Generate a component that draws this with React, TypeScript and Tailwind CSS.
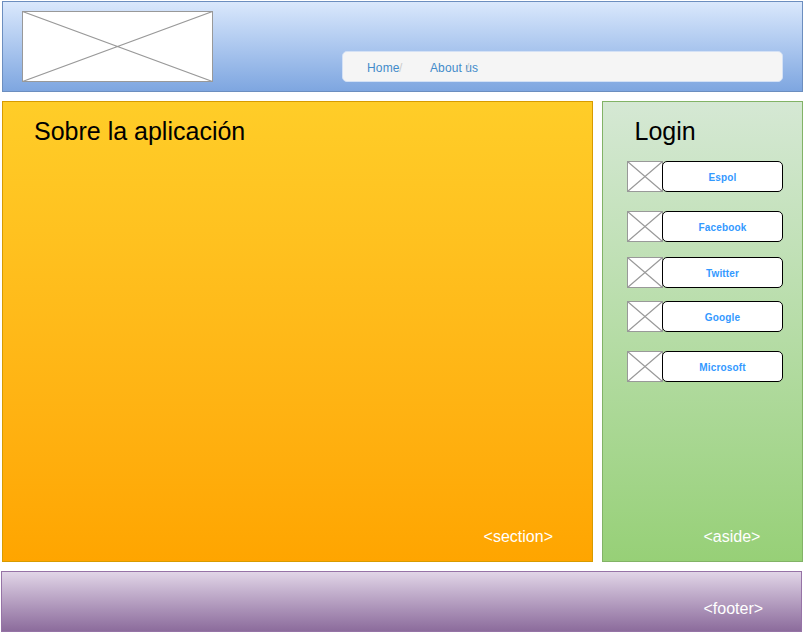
type CrossProps = { w: number; h: number; className?: string };

function ImagePlaceholder({ w, h, className = "" }: CrossProps) {
  return (
    <svg width={w} height={h} viewBox={`0 0 ${w} ${h}`} className={`block shrink-0 ${className}`}>
      <rect x="0.5" y="0.5" width={w - 1} height={h - 1} fill="#fff" stroke="#999" />
      <path d={`M0.5 0.5L${w - 0.5} ${h - 0.5}M${w - 0.5} 0.5L0.5 ${h - 0.5}`} stroke="#999" strokeWidth="1.15" fill="none" />
    </svg>
  );
}

function LoginButton({ label, className = "" }: { label: string; className?: string }) {
  return (
    <div className={`flex h-[31px] ${className}`}>
      <ImagePlaceholder w={36} h={31} />
      <button className="-ml-px w-[121px] rounded-[5px] border border-black bg-white pt-[2px] text-center text-[10px] leading-[12px] font-bold tracking-[0.15px] text-[#3399ff]">
        {label}
      </button>
    </div>
  );
}

export default function App() {
  return (
    <div className="h-[634px] w-[804px] overflow-hidden bg-white pt-px font-['Liberation_Sans',Arial,sans-serif]">
      <header className="ml-[2px] flex h-[91px] w-[801px] justify-between border border-[#6c8ebf] bg-linear-to-b from-[#dae8fc] to-[#7ea6e0] pr-[19px] pl-[19px]">
        <ImagePlaceholder w={191} h={71} className="mt-[9px]" />
        <nav className="mt-[49px] flex h-[31px] w-[441px] rounded-[5px] border border-[#d4e1f5] bg-[#f5f5f5] pt-[8px] pl-[24px] text-[12px] leading-[16px] text-[#428bca]">
          <a className="relative w-[63px] tracking-[0.15px]">
            Home<span className="absolute top-0 left-[32px] text-[#ccc]">/</span>
          </a>
          <a className="relative tracking-[0.1px]">
            About us<span className="absolute top-0 left-[36px] text-[#ccc]">/</span>
          </a>
        </nav>
      </header>

      <main className="mt-[9px] ml-[2px] flex gap-[9px]">
        <section className="flex h-[461px] w-[591px] flex-col justify-between border border-[#d79b00] bg-linear-to-b from-[#ffcd28] to-[#ffa500] pt-[14px] pr-[39px] pb-[15px] pl-[31px]">
          <h1 className="text-[25px] leading-[30px] text-black">Sobre la aplicación</h1>
          <span className="self-end text-[16px] leading-[18px] text-white">&lt;section&gt;</span>
        </section>

        <aside className="flex h-[461px] w-[201px] flex-col border border-[#82b366] bg-linear-to-b from-[#d5e8d4] to-[#97d077] pb-[15px] pl-[24px]">
          <h1 className="mt-[14px] ml-[7.5px] text-[25px] leading-[30px] text-black">Login</h1>
          <LoginButton label="Espol" className="mt-[15px]" />
          <LoginButton label="Facebook" className="mt-[19px]" />
          <LoginButton label="Twitter" className="mt-[15px]" />
          <LoginButton label="Google" className="mt-[13px]" />
          <LoginButton label="Microsoft" className="mt-[19px]" />
          <span className="mt-auto ml-[76.5px] text-[16px] leading-[18px] text-white">&lt;aside&gt;</span>
        </aside>
      </main>

      <footer className="mt-[9px] ml-px flex h-[61px] w-[801px] items-end border border-[#9673a6] bg-linear-to-b from-[#e1d5e7] to-[#8c6c9c] pb-[13px] pl-[701.5px] text-[16px] leading-[18px] text-white">
        &lt;footer&gt;
      </footer>
    </div>
  );
}
